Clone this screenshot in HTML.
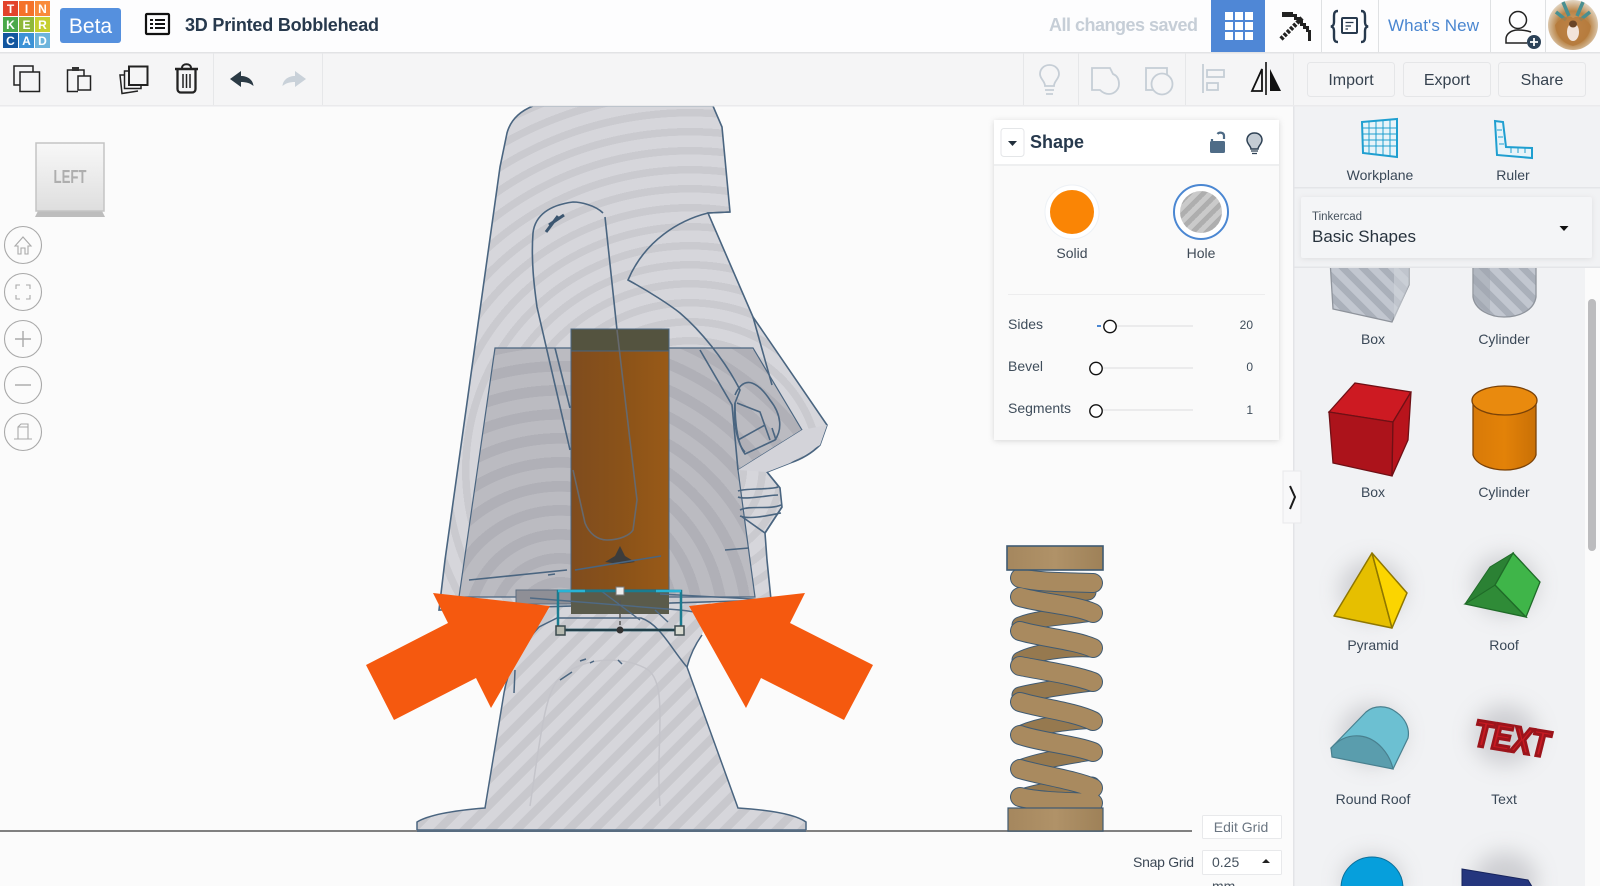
<!DOCTYPE html>
<html><head><meta charset="utf-8"><title>3D Printed Bobblehead</title>
<style>
html,body{margin:0;padding:0;background:#fbfbfb;overflow:hidden}
svg{display:block;font-family:"Liberation Sans",sans-serif}
</style></head><body>
<svg width="1600" height="886" viewBox="0 0 1600 886" xmlns="http://www.w3.org/2000/svg">
<defs>
<radialGradient id="head" gradientUnits="userSpaceOnUse" cx="690" cy="470" r="19" spreadMethod="repeat"><stop offset="0" stop-color="#d6d6db"/><stop offset=".6" stop-color="#d6d6db"/><stop offset=".61" stop-color="#cacacf"/><stop offset="1" stop-color="#cacacf"/></radialGradient>
<radialGradient id="dark" gradientUnits="userSpaceOnUse" cx="560" cy="625" r="24" spreadMethod="repeat"><stop offset="0" stop-color="#bbbbc1"/><stop offset=".55" stop-color="#bbbbc1"/><stop offset=".56" stop-color="#b0b0b7"/><stop offset="1" stop-color="#b0b0b7"/></radialGradient>
<linearGradient id="low" gradientUnits="userSpaceOnUse" x1="0" y1="0" x2="13" y2="13" spreadMethod="repeat"><stop offset="0" stop-color="#d6d6db"/><stop offset=".55" stop-color="#d6d6db"/><stop offset=".56" stop-color="#c8c8cd"/><stop offset="1" stop-color="#c8c8cd"/></linearGradient>
<linearGradient id="grayS" gradientUnits="userSpaceOnUse" x1="0" y1="0" x2="10" y2="-10" spreadMethod="repeat"><stop offset="0" stop-color="#c2c7d0"/><stop offset=".5" stop-color="#c2c7d0"/><stop offset=".51" stop-color="#aab0ba"/><stop offset="1" stop-color="#aab0ba"/></linearGradient>
<linearGradient id="holeS" gradientUnits="userSpaceOnUse" x1="0" y1="0" x2="7" y2="7" spreadMethod="repeat"><stop offset="0" stop-color="#cacaca"/><stop offset=".5" stop-color="#cacaca"/><stop offset=".51" stop-color="#aeaeae"/><stop offset="1" stop-color="#aeaeae"/></linearGradient>
<linearGradient id="orange" x1="0" x2="1" y1="0" y2="0"><stop offset="0" stop-color="#7f4c1e"/><stop offset=".5" stop-color="#8a5219"/><stop offset="1" stop-color="#995a17"/></linearGradient>
<linearGradient id="cyl" x1="0" x2="1" y1="0" y2="0"><stop offset="0" stop-color="#d87a08"/><stop offset=".5" stop-color="#e38208"/><stop offset="1" stop-color="#c97006"/></linearGradient>
<linearGradient id="cap" x1="0" x2="1" y1="0" y2="0"><stop offset="0" stop-color="#a5875e"/><stop offset=".5" stop-color="#b09268"/><stop offset="1" stop-color="#9e8158"/></linearGradient>
<linearGradient id="cube" x1="0" x2="0" y1="0" y2="1"><stop offset="0" stop-color="#f8f8f8"/><stop offset="1" stop-color="#dedede"/></linearGradient>
<radialGradient id="ava" cx=".5" cy=".55" r=".55"><stop offset="0" stop-color="#d9a874"/><stop offset=".6" stop-color="#b98447"/><stop offset="1" stop-color="#e4d8c6"/></radialGradient>
<filter id="sh" x="-20%" y="-20%" width="140%" height="140%"><feGaussianBlur stdDeviation="3"/></filter>
<filter id="bl" x="-40%" y="-40%" width="180%" height="180%"><feGaussianBlur stdDeviation="11"/></filter>
</defs>

<rect width="1600" height="886" fill="#fbfbfb"/>

<!-- view cube -->
<path d="M38 211H102L105 217H35Z" fill="#bdbdbd"/>
<rect x="36" y="143" width="68" height="68" fill="url(#cube)" stroke="#c4c4c4" stroke-width="1.5"/>
<text x="70" y="183" text-anchor="middle" font-size="18" font-weight="700" fill="#aeaeae" textLength="33" lengthAdjust="spacingAndGlyphs">LEFT</text>

<!-- nav buttons -->
<g fill="none" stroke="#a9a9a9" stroke-width="1.1">
<circle cx="23" cy="245" r="18.5"/><circle cx="23" cy="292" r="18.5"/><circle cx="23" cy="339" r="18.5"/><circle cx="23" cy="385" r="18.5"/><circle cx="23" cy="432" r="18.5"/>
<path d="M15 246L23 237L31 246H28V254H25V248H21V254H18V246Z"/>
<path d="M16 289V285H20M26 285H30V289M16 295V299H20M26 299H30V295"/>
<path d="M23 331V347M15 339H31" stroke-width="1.4"/>
<path d="M15 385H31" stroke-width="1.4"/>
<path d="M14 439H32M18 439V427L21 424H28V439M18 427H28"/>
</g>

<!-- moai lower body -->
<path d="M535 630L545 598H712L702 635C697 642 691 652 687 667Z" fill="url(#low)"/>
<path d="M417 830V822C430 814 460 810 485 808L504 693C508 670 518 650 539 627L557 618H641C660 624 672 650 687 667L738 808C770 810 795 814 806 822V830Z" fill="url(#low)" stroke="#4a6580" stroke-width="1.5"/>
<path d="M687 667C691 652 697 642 702 635" fill="none" stroke="#4a6580" stroke-width="1.5"/>
<path d="M530 806C540 740 545 690 560 678C580 658 620 655 645 668C670 680 655 740 660 806" fill="none" stroke="#c4c4ca" stroke-width="1.5"/>
<path d="M560 680L572 672M580 661L586 659M590 663L594 661M618 660L622 664M515 670L514 693" stroke="#4a6580" stroke-width="1.5" fill="none"/>

<!-- moai head -->
<path id="hd" d="M533 106C518 112 510 122 507 133L500 167L445 560L439 610L771 600L767 560L765 533L782 507L780 488L767 472L790 463C805 458 815 450 820 445L827 425L753 317L708 213L730 212L722 127L713 106Z" fill="url(#head)" stroke="#4a6580" stroke-width="1.6"/>
<path d="M495 348H753L802 430L738 470L750 560L755 597L459 597Z" fill="url(#dark)" stroke="#4a6580" stroke-width="1.2"/>
<path d="M802 430L827 425L820 445L790 463L767 472L738 470Z" fill="#d3d3d9"/>
<!-- head lines -->
<g fill="none" stroke="#4a6580" stroke-width="1.6">
<path d="M730 212L708 213C680 220 645 240 628 280C650 292 670 305 680 313C700 330 725 360 740 390L735 403C733 425 738 445 745 452"/>
<path d="M603 213C595 205 580 202 573 202C550 205 535 215 533 233C531 260 534 285 537 307L570 450"/>
<path d="M617 330L605 217"/>
<path d="M555 348L570 408M700 350L732 405L738 470M753 317L772 385M735 395C745 372 760 385 770 400C782 415 782 430 775 440L745 454C738 445 735 425 735 403"/>
<path d="M737 403L760 412L770 440M738 440L765 425M772 428L776 440"/>
<path d="M738 491C745 488 770 490 778 487M738 497C745 500 770 495 778 495M740 510C750 505 770 510 781 505M740 516C750 520 770 515 781 513M767 472L780 488M782 507L765 533L741 516"/>
<path d="M725 550L749 548M469 580L567 570M548 575L555 574"/>
</g>
<path d="M549 225L564 215M546 232L558 216" stroke="#3c5670" stroke-width="3" fill="none"/>

<!-- orange hole -->
<rect x="571" y="351" width="98" height="239" fill="url(#orange)" stroke="#4a6580" stroke-width="1"/>
<rect x="571" y="329" width="98" height="22" fill="#54533f" stroke="#4a6580" stroke-width="1"/>
<path d="M617 330L637 500L633 530C630 535 620 540 607 540C597 540 589 533 585 523L573 470" fill="none" stroke="#66696e" stroke-width="1.6"/>
<path d="M620 546L625 556L635 562L628 563L620 564L612 563L605 562L615 556Z" fill="#3c3c3c"/>
<path d="M575 570L661 556" stroke="#4a6580" stroke-width="1.5"/>
<!-- band -->
<rect x="516" y="590" width="55" height="14" fill="#8f8f96" stroke="#5c6d80" stroke-width="1"/>
<rect x="571" y="589" width="98" height="25" fill="#5a5b4b"/>
<path d="M600 590L640 620M530 598L680 610C700 612 720 618 735 625M660 594L771 600M655 610L668 622" stroke="#4f6a85" stroke-width="1.4" fill="none"/>
<!-- selection box -->
<g fill="none">
<rect x="558" y="591" width="123" height="39" stroke="#1a7c90" stroke-width="2.5"/>
<path d="M558 591H585M656 591H681" stroke="#27b4d6" stroke-width="2.5"/>
<path d="M560 630H679" stroke="#22404a" stroke-width="2.5"/>
<path d="M620 600V626" stroke="#555" stroke-width="1.5" stroke-dasharray="4 3"/>
</g>
<rect x="616" y="587" width="8" height="8" fill="#eee" stroke="#777"/>
<rect x="556" y="626" width="9" height="9" fill="#b6bab0" stroke="#3c4a4e" stroke-width="1.5"/>
<rect x="675" y="626" width="9" height="9" fill="#d8dad0" stroke="#3c4a4e" stroke-width="1.5"/>
<circle cx="620" cy="630" r="3.5" fill="#333"/>

<!-- ground line -->
<rect x="0" y="830" width="1192" height="2" fill="#808080"/>
<path d="M417 831H806" stroke="#4a6580" stroke-width="1.5"/>

<!-- arrows -->
<path d="M550 606L433 593L448 623L366 665L394 720L476 678L491 708Z" fill="#f5590f"/>
<path d="M689 606L805 593L790 623L873 665L844 720L761 678L746 708Z" fill="#f5590f"/>

<!-- spring -->
<g fill="none" stroke-linecap="round">
<g stroke="#3f5a72" stroke-width="17">
<path d="M1092 613C1070 617 1040 617 1020 625M1092 649C1075 648 1040 650 1020 660M1092 683C1075 685 1040 690 1020 695M1092 720C1075 722 1045 723 1022 733M1092 752C1075 755 1040 760 1020 768M1092 785C1075 788 1050 788 1022 797"/>
<path d="M1088 592C1075 594 1045 595 1028 596"/>
</g>
<g stroke="#96794f" stroke-width="15">
<path d="M1092 613C1070 617 1040 617 1020 625M1092 649C1075 648 1040 650 1020 660M1092 683C1075 685 1040 690 1020 695M1092 720C1075 722 1045 723 1022 733M1092 752C1075 755 1040 760 1020 768M1092 785C1075 788 1050 788 1022 797"/>
<path d="M1088 592C1075 594 1045 595 1028 596"/>
</g>
<g stroke="#3f5a72" stroke-width="20">
<path d="M1020 578C1040 583 1075 582 1093 583M1020 597C1040 603 1075 605 1093 613M1020 631C1040 637 1075 640 1093 648M1020 666C1040 670 1075 675 1093 682M1020 702C1040 708 1075 712 1093 721M1020 735C1040 742 1075 745 1093 752M1020 769C1040 775 1075 780 1093 788M1020 797C1040 802 1075 802 1093 803"/>
</g>
<g stroke="#a98a5f" stroke-width="18">
<path d="M1020 578C1040 583 1075 582 1093 583M1020 597C1040 603 1075 605 1093 613M1020 631C1040 637 1075 640 1093 648M1020 666C1040 670 1075 675 1093 682M1020 702C1040 708 1075 712 1093 721M1020 735C1040 742 1075 745 1093 752M1020 769C1040 775 1075 780 1093 788M1020 797C1040 802 1075 802 1093 803"/>
</g>
</g>
<rect x="1007" y="546" width="96" height="24" fill="url(#cap)" stroke="#3f5a72" stroke-width="1.6"/>
<rect x="1008" y="808" width="95" height="23" fill="url(#cap)" stroke="#3f5a72" stroke-width="1.2"/>

<!-- Edit grid / snap -->
<rect x="1202.5" y="815.5" width="79" height="23" fill="#fff" stroke="#e8e9eb" rx="1"/>
<text x="1241" y="832" text-anchor="middle" font-size="14" fill="#6b7682">Edit Grid</text>
<text x="1194" y="867" text-anchor="end" font-size="14" fill="#3c4855" textLength="61" lengthAdjust="spacing">Snap Grid</text>
<rect x="1202.5" y="850.5" width="79" height="24" fill="#fff" stroke="#e8e9eb" rx="1"/>
<text x="1212" y="867" font-size="14" fill="#46525e">0.25</text>
<path d="M1262 863L1266 859L1270 863Z" fill="#222"/>
<text x="1212" y="891" font-size="14" fill="#46525e">mm</text>

<!-- Shape panel -->
<rect x="994" y="121" width="285" height="320" fill="#aaa" opacity=".45" filter="url(#sh)"/>
<rect x="994" y="120" width="285" height="320" fill="#fafafa"/>
<rect x="994" y="120" width="285" height="45" fill="#fff"/>
<rect x="994" y="164" width="285" height="2" fill="#eeeff0"/>
<rect x="1001" y="128.500" width="23" height="28" rx="3" fill="#fff" stroke="#e4e6e8"/>
<path d="M1008 141H1017L1012.500 146Z" fill="#222f3c"/>
<text x="1030" y="148" font-size="18" font-weight="700" fill="#27394d">Shape</text>
<path d="M1212 139V141M1224 139V136C1224 132 1219 132 1217.500 134" fill="none" stroke="#4d6a85" stroke-width="2.2"/>
<rect x="1210" y="141" width="15" height="12" rx="1.500" fill="#4f6c87"/>
<path d="M1254.500 133C1249 133 1247 137 1247 140C1247 144 1251 146 1251 149H1258C1258 146 1262 144 1262 140C1262 137 1260 133 1254.500 133Z" fill="#c4ccd4" stroke="#2f4255" stroke-width="1.5"/>
<path d="M1251 151H1258M1252 153.500H1257" stroke="#2f4255" stroke-width="1.300"/>
<circle cx="1072" cy="212" r="27" fill="#fff" stroke="#edf1f5"/>
<circle cx="1072" cy="212" r="22" fill="#fa8505"/>
<circle cx="1201" cy="212" r="27" fill="#fff" stroke="#4b87d2" stroke-width="2"/>
<circle cx="1201" cy="212" r="21" fill="url(#holeS)"/>
<text x="1072" y="258" text-anchor="middle" font-size="14" fill="#3f4a56">Solid</text>
<text x="1201" y="258" text-anchor="middle" font-size="14" fill="#3f4a56">Hole</text>
<rect x="1008" y="294" width="257" height="1" fill="#ededee"/>
<g font-size="14" fill="#3f4d5b">
<text x="1008" y="329">Sides</text>
<text x="1008" y="371">Bevel</text>
<text x="1008" y="413">Segments</text>
</g>
<g font-size="12" fill="#3f4d5b" text-anchor="end">
<text x="1253" y="329">20</text>
<text x="1253" y="371">0</text>
<text x="1253" y="414">1</text>
</g>
<g fill="#ebebec">
<rect x="1110" y="325" width="83" height="2"/><rect x="1096" y="367" width="97" height="2"/><rect x="1096" y="409" width="97" height="2"/>
</g>
<rect x="1097" y="325" width="4" height="2" fill="#4b87d2"/>
<g fill="#fff" stroke="#111" stroke-width="1.400">
<circle cx="1110" cy="326.500" r="6.200"/><circle cx="1096" cy="368.500" r="6.200"/><circle cx="1096" cy="411" r="6.200"/>
</g>

<!-- right panel -->
<rect x="1293" y="106" width="307" height="780" fill="#f1f2f4"/>
<rect x="1293" y="106" width="1.500" height="780" fill="#e3e4e7"/>
<rect x="1585" y="268" width="15" height="618" fill="#fbfbfb"/>
<rect x="1588" y="299" width="8" height="252" rx="4" fill="#bcbcbe"/>

<!-- chevron tab -->
<rect x="1283" y="471" width="18" height="52" fill="#f8f8f9" stroke="#e9e9eb"/>
<path d="M1290 486L1295 497L1290 509" fill="none" stroke="#1b1b1b" stroke-width="2"/>

<!-- shape shadows -->
<g fill="#9a9aa0" opacity=".4" filter="url(#bl)">
<ellipse cx="1372" cy="590" rx="32" ry="30"/><ellipse cx="1505" cy="585" rx="32" ry="30"/>
<ellipse cx="1372" cy="735" rx="32" ry="30"/><ellipse cx="1505" cy="735" rx="32" ry="30"/>
<ellipse cx="1372" cy="880" rx="30" ry="25"/><ellipse cx="1505" cy="880" rx="32" ry="28"/>
</g>

<!-- gray box / cylinder -->
<path d="M1330 260L1333 309L1392 322L1409 285V260Z" fill="url(#grayS)" stroke="#8f949c" stroke-width="1.300"/>
<path d="M1394 260V320L1409 285V260Z" fill="#cfd3da" opacity=".6"/>
<path d="M1473 260V297C1475 310 1490 317 1504 317C1520 317 1534 310 1536 297V260Z" fill="url(#grayS)" stroke="#8f949c" stroke-width="1.300"/>
<path d="M1474 260V298C1478 306 1484 311 1490 313V260Z" fill="#9ea3ac" opacity=".45"/>

<!-- red box -->
<path d="M1355 383L1411 392L1393 422L1329 412Z" fill="#cd1a22" stroke="#6f1015" stroke-width="1.300"/>
<path d="M1329 412L1393 422L1392 476L1333 463Z" fill="#ac131b" stroke="#6f1015" stroke-width="1.300"/>
<path d="M1393 422L1411 392L1408 440L1392 476Z" fill="#b8141c" stroke="#6f1015" stroke-width="1.300"/>

<!-- orange cyl -->
<path d="M1473 401V455C1476 465 1492 470 1505 470C1518 470 1533 465 1536 455V401Z" fill="url(#cyl)" stroke="#7a4208" stroke-width="1.300"/>
<ellipse cx="1504.500" cy="400.500" rx="32.500" ry="14.500" fill="#e98a0e" stroke="#7a4208" stroke-width="1.300"/>

<!-- pyramid -->
<path d="M1372 553L1392 628L1334 616Z" fill="#e6bf00" stroke="#8f7700" stroke-width="1.500" stroke-linejoin="round"/>
<path d="M1372 553L1407 593L1392 628Z" fill="#fbd500" stroke="#8f7700" stroke-width="1.500" stroke-linejoin="round"/>
<!-- roof -->
<path d="M1465 604L1495 585L1526 617Z" fill="#2f8b37" stroke="#1f6b28" stroke-width="1.300"/>
<path d="M1465 604L1490 567L1513 553L1495 585Z" fill="#2b8134" stroke="#1f6b28"/>
<path d="M1513 553L1540 582L1526 617L1495 585Z" fill="#3fb549" stroke="#1f6b28" stroke-width="1.300"/>
<!-- round roof -->
<path d="M1331 748L1366 712C1374 705 1387 705 1396 712C1405 718 1410 728 1408 738L1393 769Z" fill="#6cc0d2" stroke="#49808f" stroke-width="1.200"/>
<path d="M1331 748C1340 738 1350 735 1360 736C1378 738 1390 755 1393 769L1332 757Z" fill="#5a9dad" stroke="#49808f" stroke-width="1.200"/>
<!-- 3D text -->
<g transform="translate(1466,744) skewX(-14) skewY(9)"><text x="6" y="0" font-size="36" font-weight="700" fill="#c81a22" stroke="#9c141b" stroke-width="3" textLength="78" lengthAdjust="spacingAndGlyphs">TEXT</text></g>
<!-- sphere / navy -->
<circle cx="1372" cy="888" r="31" fill="#069fdc" stroke="#0a6f9a"/>
<path d="M1462 869L1528 880L1534 890H1462Z" fill="#25367e" stroke="#17245c"/>

<!-- labels -->
<g font-size="14" fill="#3a4857" text-anchor="middle">
<text x="1373" y="344">Box</text><text x="1504" y="344">Cylinder</text>
<text x="1373" y="497">Box</text><text x="1504" y="497">Cylinder</text>
<text x="1373" y="650">Pyramid</text><text x="1504" y="650">Roof</text>
<text x="1373" y="804">Round Roof</text><text x="1504" y="804">Text</text>
</g>

<!-- panel top -->
<rect x="1294.500" y="106" width="305.500" height="162" fill="#f1f2f4"/>
<rect x="1294.500" y="187" width="305.500" height="1.500" fill="#e4e5e8"/>
<rect x="1294.500" y="266.500" width="305.500" height="1.500" fill="#e4e5e8"/>
<rect x="1301" y="198" width="291" height="61" fill="#bbb" opacity=".35" filter="url(#sh)"/>
<rect x="1301" y="197" width="291" height="61" rx="2" fill="#f4f5f7"/>
<text x="1312" y="220" font-size="11.500" fill="#46525e">Tinkercad</text>
<text x="1312" y="242" font-size="17" fill="#27323d">Basic Shapes</text>
<path d="M1559.500 226H1568.500L1564 231Z" fill="#111"/>
<text x="1380" y="180" text-anchor="middle" font-size="14" fill="#3a4857">Workplane</text>
<text x="1513" y="180" text-anchor="middle" font-size="14" fill="#3a4857">Ruler</text>
<!-- workplane icon -->
<g fill="none" stroke="#1f9fd0">
<path d="M1362 122L1397 119V157L1363 153Z" fill="#e8f4f9" stroke-width="2"/>
<path d="M1362.500 128H1397M1363 134H1397M1363 140H1397M1363 146H1397M1369 121V154M1376 121V155M1383 120V155M1390 120V156" stroke-width="1"/>
</g>
<!-- ruler icon -->
<path d="M1495 121L1503 122L1506 147L1532 148V158L1497 155Z" fill="#e8f4f9" stroke="#1f9fd0" stroke-width="2"/>
<path d="M1497 130H1502M1498 137H1503M1499 144H1504M1511 148V153M1518 148V153M1525 148V153" stroke="#1f9fd0" stroke-width="1" fill="none"/>

<!-- top bar -->
<rect x="0" y="0" width="1600" height="52" fill="#fdfdfe"/>
<rect x="0" y="53" width="1600" height="53" fill="#f5f5f6"/>
<rect x="0" y="52" width="1600" height="1.500" fill="#e2e3e5"/>
<rect x="0" y="105" width="1600" height="1.500" fill="#eaeaec"/>

<!-- logo -->
<g><rect x="3" y="1" width="15" height="15" fill="#e2432c"/><rect x="19" y="1" width="15" height="15" fill="#f4722b"/><rect x="35" y="1" width="15" height="15" fill="#f98b3c"/>
<rect x="3" y="17" width="15" height="15" fill="#4aa84a"/><rect x="19" y="17" width="15" height="15" fill="#8fb83a"/><rect x="35" y="17" width="15" height="15" fill="#c6cf30"/>
<rect x="3" y="33" width="15" height="15" fill="#12569f"/><rect x="19" y="33" width="15" height="15" fill="#3c92d6"/><rect x="35" y="33" width="15" height="15" fill="#6db4dc"/></g>
<g font-size="12" font-weight="700" fill="#fff" text-anchor="middle">
<text x="10.500" y="13">T</text><text x="26.500" y="13">I</text><text x="42.500" y="13">N</text>
<text x="10.500" y="29">K</text><text x="26.500" y="29">E</text><text x="42.500" y="29">R</text>
<text x="10.500" y="45">C</text><text x="26.500" y="45">A</text><text x="42.500" y="45">D</text></g>
<rect x="60" y="8" width="61" height="35" rx="3" fill="#5590de"/>
<text x="90.500" y="33" text-anchor="middle" font-size="21" fill="#fff">Beta</text>
<!-- list icon -->
<rect x="146" y="14" width="23" height="20" rx="1" fill="none" stroke="#111" stroke-width="2.200"/>
<path d="M150 20H153M155 20H165M150 24H153M155 24H165M150 28H153M155 28H165" stroke="#111" stroke-width="2"/>
<text x="185" y="31" font-size="18" font-weight="700" fill="#27394d" textLength="194" lengthAdjust="spacing">3D Printed Bobblehead</text>

<text x="1198" y="31" text-anchor="end" font-size="18" font-weight="700" fill="#c6ced7" textLength="149" lengthAdjust="spacing">All changes saved</text>
<rect x="1211" y="0" width="54" height="52" fill="#4f87d6"/>
<g fill="#fff"><rect x="1225" y="12" width="8" height="8"/><rect x="1235" y="12" width="8" height="8"/><rect x="1245" y="12" width="8" height="8"/><rect x="1225" y="22" width="8" height="8"/><rect x="1235" y="22" width="8" height="8"/><rect x="1245" y="22" width="8" height="8"/><rect x="1225" y="32" width="8" height="8"/><rect x="1235" y="32" width="8" height="8"/><rect x="1245" y="32" width="8" height="8"/></g>
<!-- pick -->
<path d="M1281 39L1302 18" stroke="#222" stroke-width="4.500" stroke-dasharray="3 1.500" fill="none"/>
<path d="M1282 12H1293V14H1297V17H1300V20H1303V23H1306V26H1309V30H1311V41H1308V32H1306V29H1303V26H1300V23H1297V20H1294V17H1282Z" fill="#222"/>
<g fill="#dfe1e3"><rect x="1321" y="0" width="1" height="52"/><rect x="1378" y="0" width="1" height="52"/><rect x="1490" y="0" width="1" height="52"/><rect x="1545" y="0" width="1" height="52"/></g>
<!-- braces -->
<path d="M1338 11C1334 11 1334 14 1334 17V22C1334 25 1333 26 1331 26.500C1333 27 1334 28 1334 31V36C1334 39 1334 42 1338 42M1361 11C1365 11 1365 14 1365 17V22C1365 25 1366 26 1368 26.500C1366 27 1365 28 1365 31V36C1365 39 1365 42 1361 42" fill="none" stroke="#27394d" stroke-width="2.400"/>
<rect x="1342" y="18" width="15" height="15" rx="1" fill="none" stroke="#27394d" stroke-width="2"/>
<path d="M1345.500 22.500H1353.500M1345.500 26H1351M1345.500 29H1348" stroke="#27394d" stroke-width="1.300"/>
<text x="1388" y="31" font-size="17" fill="#4a86d0" textLength="91" lengthAdjust="spacing">What's New</text>
<!-- person -->
<circle cx="1518" cy="20" r="8.500" fill="none" stroke="#222" stroke-width="1.500"/>
<path d="M1531 32C1528 31 1523 30 1518 30C1511 30 1506 34 1506 39V43H1527" fill="none" stroke="#222" stroke-width="1.500"/>
<circle cx="1534" cy="42" r="7" fill="#2c4258"/>
<path d="M1530 42H1538M1534 38V46" stroke="#fff" stroke-width="1.800"/>
<!-- avatar -->
<circle cx="1573" cy="25" r="25" fill="url(#ava)"/>
<path d="M1556 12L1566 20M1563 2L1569 16M1590 12L1580 20M1583 2L1577 16" stroke="#4a8f90" stroke-width="3.500"/>
<path d="M1555 25C1560 18 1568 14 1573 18C1580 14 1588 20 1591 26C1590 36 1582 44 1573 46C1564 44 1556 36 1555 25Z" fill="#b5793b" opacity=".8"/>
<ellipse cx="1573" cy="32" rx="6" ry="9" fill="#f2e4da"/><ellipse cx="1573" cy="24" rx="4" ry="3.500" fill="#6a4526"/>

<!-- toolbar left icons -->
<g fill="none" stroke="#222" stroke-width="1.500">
<path d="M20 85H14V66H33V72"/><rect x="20" y="72" width="19.500" height="19.500"/>
<path d="M78 70H84V76M78 91.500H67.500V70H73"/><rect x="72" y="67" width="7" height="4" fill="#333" stroke="none"/><rect x="78" y="76" width="12.500" height="14"/>
<rect x="129" y="66.500" width="18.500" height="18.500" stroke-width="2"/>
<path d="M128 71H124.500V88.500H141V85M124 75H120L122 93.500L138 91"/>
<path d="M175 69H198" stroke-width="2.500"/><path d="M182 68C182 63 191 63 191 68" stroke-width="2"/>
<path d="M177.500 70V89C177.500 91 179 92.500 181 92.500H192C194 92.500 195.500 91 195.500 89V70" stroke-width="2.300"/>
<path d="M183 74V88M186.500 74V88M190 74V88" stroke-width="1.500"/>
</g>
<path d="M230 79L241 71V76C248 76 253 80 253.500 86C250 83 246 82 241 82V87Z" fill="#2b3a45"/>
<path d="M306 79L295 71V76C288 76 283 80 282.500 86C286 83 290 82 295 82V87Z" fill="#c9d1d9"/>
<g fill="#e6e7e9"><rect x="213" y="53" width="1" height="52"/><rect x="322" y="53" width="1" height="52"/><rect x="1023" y="53" width="1" height="52"/><rect x="1078" y="53" width="1" height="52"/><rect x="1185" y="53" width="1" height="52"/><rect x="1293" y="53" width="1" height="52"/></g>
<!-- toolbar right icons -->
<g fill="none" stroke="#c6ced6" stroke-width="1.800">
<path d="M1049.500 65C1043 65 1040 70 1040 74C1040 79 1045 81 1045 86H1054C1054 81 1059 79 1059 74C1059 70 1056 65 1049.500 65Z"/>
<path d="M1045 90H1054M1046 94H1053"/>
<path d="M1092 68H1110L1113 74C1118 76 1119 80 1119 84C1119 90 1114 94 1109 94C1105 94 1102 92 1100 90H1092Z"/>
<rect x="1146" y="68" width="21" height="22"/><circle cx="1162" cy="84" r="10.500" fill="#f5f5f6"/>
<path d="M1203 64V93"/><rect x="1207" y="70" width="17" height="7"/><rect x="1207" y="83" width="11" height="7"/>
</g>
<path d="M1266 62V95" stroke="#111" stroke-width="1.600"/>
<path d="M1262 69V91H1252Z" fill="none" stroke="#111" stroke-width="1.800"/>
<path d="M1270 69V91H1281Z" fill="#111"/>
<!-- buttons -->
<g fill="#f5f5f6" stroke="#e5e6e8">
<rect x="1307.500" y="62.500" width="87" height="34" rx="3"/><rect x="1403.500" y="62.500" width="87" height="34" rx="3"/><rect x="1498.500" y="62.500" width="87" height="34" rx="3"/>
</g>
<g font-size="16" fill="#36424f" text-anchor="middle">
<text x="1351" y="85">Import</text><text x="1447" y="85">Export</text><text x="1542" y="85">Share</text>
</g>
</svg>
</body></html>
